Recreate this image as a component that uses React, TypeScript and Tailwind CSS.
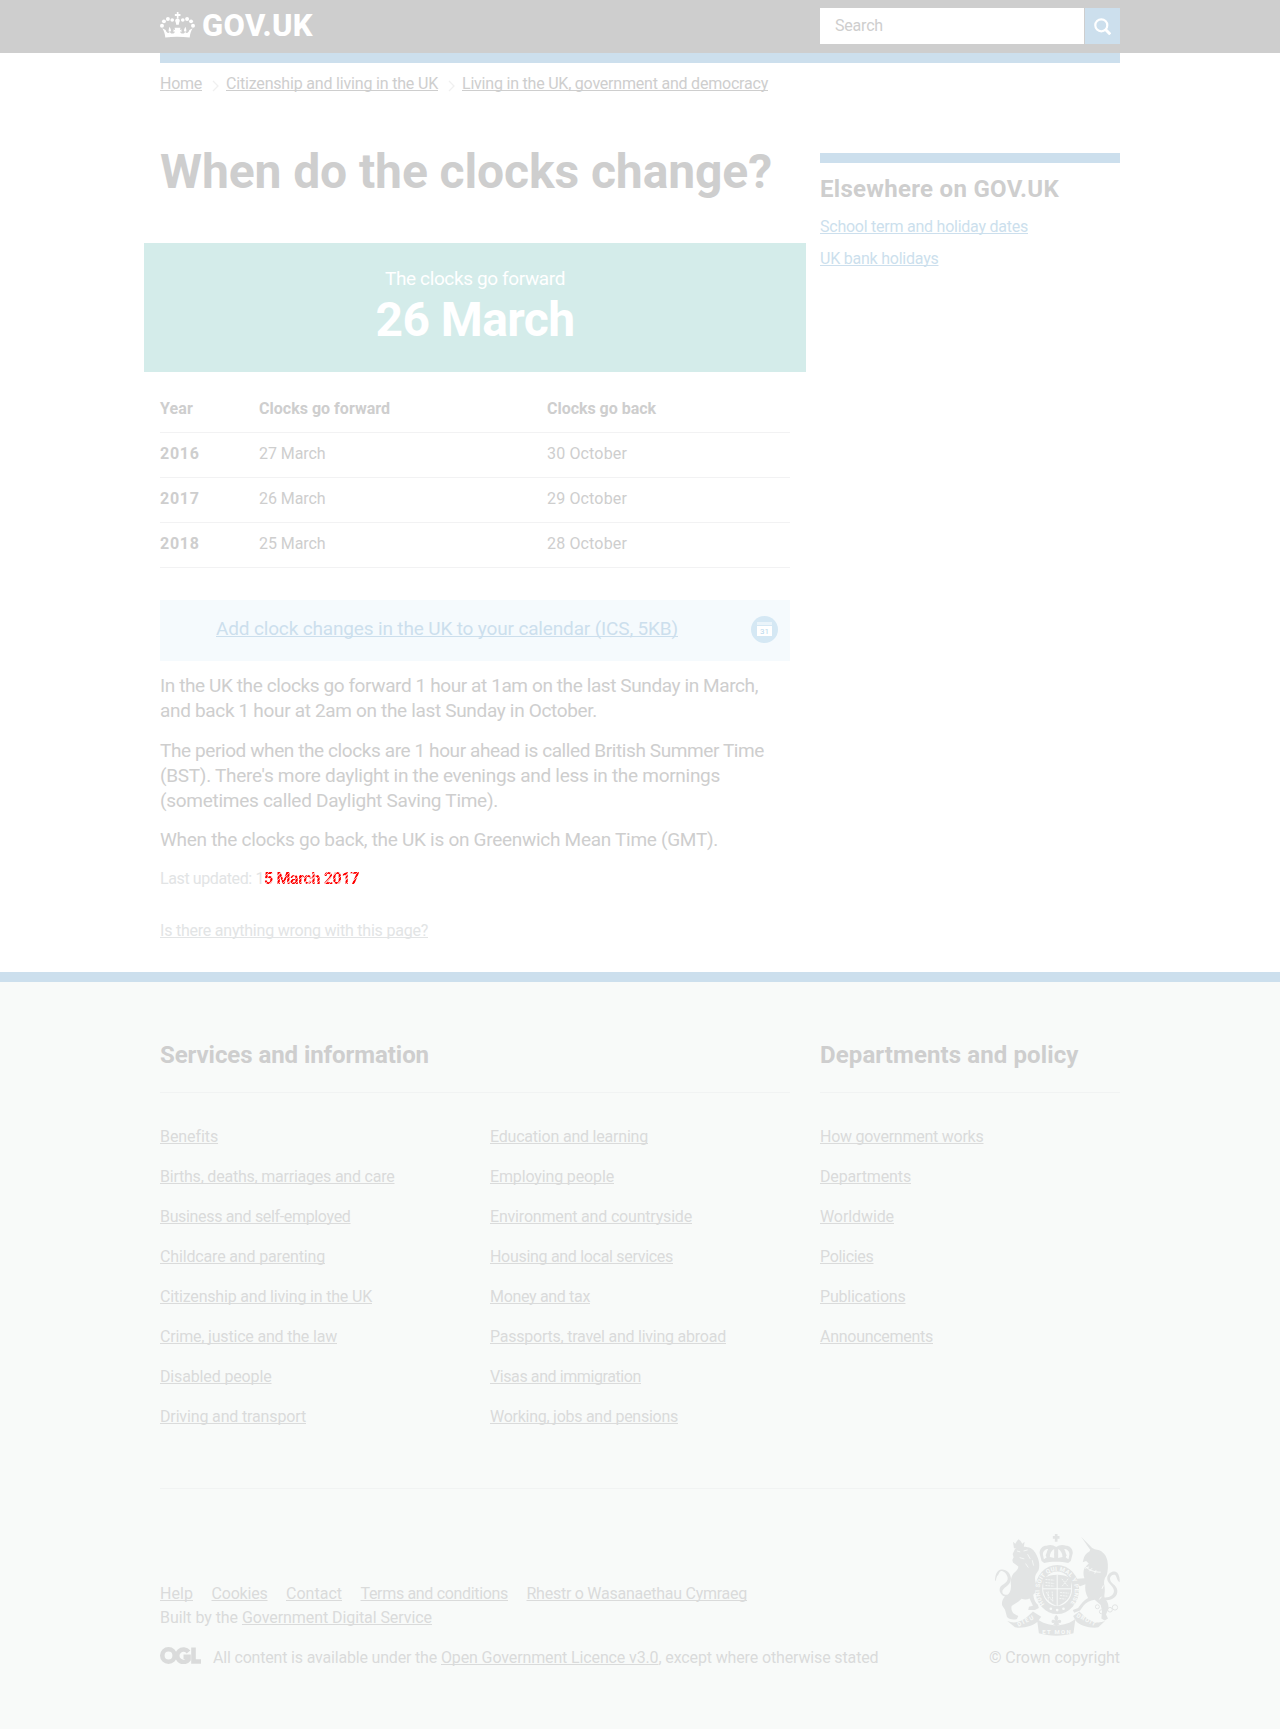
import { useLayoutEffect, useRef, useState } from "react";
import type { ReactNode } from "react";

/** Text set to a fixed measure by adjusting its tracking. */
function Fit({ w, children, className = "" }: { w: number; children: string; className?: string }) {
  const ref = useRef<HTMLSpanElement>(null);
  const [tracking, setTracking] = useState(0);
  useLayoutEffect(() => {
    if (ref.current) {
      const natural = ref.current.getBoundingClientRect().width;
      setTracking((t) => t + (w - natural) / children.length);
    }
  }, [w, children]);
  return (
    <span ref={ref} className={`whitespace-nowrap ${className}`} style={{ letterSpacing: `${tracking}px` }}>
      {children}
    </span>
  );
}

function Link({ w, children, className = "" }: { w: number; children: string; className?: string }) {
  return (
    <a href="#" className={`underline decoration-1 underline-offset-1 [text-decoration-skip-ink:none] ${className}`}>
      <Fit w={w}>{children}</Fit>
    </a>
  );
}

function Crown() {
  return (
    <svg viewBox="60 36 106 78" className="h-[26px] w-[35px]" fill="#fff">
      <path d="M76 113c-1-12-4-20-9-28l10 5c2 5 4 9 8 9 3 0 5-2 4-5l-3 1c0-6 1-10 3-15 3 5 5 10 4 15l-3-1c0 4 3 7 7 7 5 0 8-3 8-7l-4 3v-9l5 3-2-8h18l-2 8 5-3v9l-4-3c0 4 3 7 8 7 4 0 7-3 7-7l-3 1c-1-5 1-10 4-15 2 5 3 9 3 15l-3-1c-1 3 1 5 4 5 4 0 6-4 8-9l10-5c-5 8-8 16-9 28-24-3-53-3-77 0z" />
      <path d="M109 74c0-5-2-8-3-12 0-4 3-6 7-6s7 2 7 6c-1 4-3 7-3 12zM111 36h5v6h6v6h-6v7h-5v-7h-6v-6h6z" />
      <circle cx="97" cy="60" r="5.5" /><circle cx="84" cy="57" r="6" /><circle cx="72" cy="64" r="6" /><circle cx="66" cy="77" r="6" />
      <circle cx="129" cy="60" r="5.5" /><circle cx="142" cy="57" r="6" /><circle cx="154" cy="64" r="6" /><circle cx="160" cy="77" r="6" />
    </svg>
  );
}

function Crest() {
  const c = "#e2e4e4";
  return (
    <svg viewBox="74 71 376 307" className="block h-[102px] w-[125px]" fill={c}>
      {/* lion */}
      <path d="M128 94l7 6 5-8 5-5 6 5 5 8 7-6-3 20h-29z" />
      <path d="M134 116c12-8 34-9 48-2 10 6 17 18 22 32 4 12 4 24 1 34l-8 12c-4 8-3 18 0 28 3 14 0 28-8 34 2 14 6 24 14 30l3 10-12 6h-20l2-10 12-3-10-22c-8 4-16 4-24 1-10 10-22 16-30 22-2 8 0 16 6 22l14 8-4 9c-10 3-22 2-30-6l-6-22-8-12c-4-10 2-22 8-28 14-8 18-16 18-34-2-12 0-26 8-36 8-6 14-12 14-20l-16-12-2-8 4-8-3-10z" />
      <path d="M112 262c-16-2-26-14-24-26 3-16 26-14 24-34-2-12-12-20-20-20-6 2-6 10-12 16-4 8-2 16-6 14 0-14 4-32 18-34 16-2 28 10 30 26 0 24-28 28-26 42 1 6 8 9 16 8z" />
      <path d="M140 122l10 3M160 122l12-3M148 142l14 4M172 132l8 14M166 160l8 12M186 150l4 16" stroke="#f8faf9" strokeWidth="2.5" fill="none" />
      {/* unicorn */}
      <path d="M333 79l34 35-6 5zM340 148c2-12 10-20 18-24l6-12 10 5c20 2 34 14 38 34 3 14 2 32-2 44-8 10-10 22-6 36 2 20-4 26 2 36 8 10 12 22 8 32l-6 14 6 12-10 6-10-6 2-22-4-18-18-16c-14 2-26 8-34 18l-10 14-18 7-4-8 16-6c10-14 18-24 30-30-8-14-10-30-8-42l-16 6-20-14-14 4-3-8 18-14 10 10 22-2c-4-10-4-22 1-32l12-12-8-8-10 4z" />
      <path d="M402 262c18 2 30-8 30-20-2-18-24-22-20-42 4-14 20-22 30-12 6 8 8 18 7 28-8-4-8-16-14-22-8-2-15 4-15 12 0 14 20 18 22 34 2 18-14 32-38 30z" />
      {/* crown */}
      <path d="M254 71h8v6h6v8h-6v9h-8v-9h-6v-8h6z" />
      <path d="M214 152l-6-24c0-14 10-22 20-22 12-4 22-2 30 4 8-6 18-8 30-4 10 0 20 8 20 22l-6 24-8 6c-20-5-54-5-72 0z" />
      <g fill="#f8faf9"><path d="M218 132c0-10 8-16 16-16-5 8-6 16-5 26l-8 5zM239 140c0-10 4-18 13-24v27zM298 132c0-10-8-16-16-16 5 8 6 16 5 26l8 5zM277 140c0-10-4-18-13-24v27z" /></g>
      <g><path d="M232 126l6 9-6 9-6-9zM258 123l6 9-6 10-6-10zM284 126l6 9-6 9-6-9z" /></g>
      {/* garter and shield */}
      <ellipse cx="261" cy="238" rx="66" ry="74" />
      <ellipse cx="261" cy="236" rx="45" ry="52" fill="#f8faf9" />
      <path d="M219 204c28-14 56-14 84 0v36c-2 22-16 38-42 48-26-10-40-26-42-48z" />
      <path d="M261 194v94M218 236h86" stroke="#f8faf9" strokeWidth="3" />
      <path d="M226 208l26 2M226 217l26 3M226 226l26 2M270 247l26 2M270 256l22 2M268 265l18 2M275 206l18 22M276 228l18-22M228 246l17 25M234 244v28M246 244l2 32" stroke="#f8faf9" strokeWidth="2.5" fill="none" strokeDasharray="6 2" />
      <defs><path id="garter" d="M223 282a53 59 0 1 1 76 0" /></defs>
      <text fill="#f8faf9" fontFamily="Roboto" fontWeight="700" fontSize="18">
        <textPath href="#garter" textLength="262">HONI SOIT QUI MAL Y PENSE</textPath>
      </text>
      <g fill="#f8faf9"><circle cx="242" cy="296" r="4" /><circle cx="261" cy="300" r="4" /><circle cx="280" cy="296" r="4" /></g>
      <path d="M258 314c8 8 8 12 3 18 6-5 13-3 12 3-1 5-6 5-9 2l4 7-6 1-3 8-4-8-6-1 4-7c-3 3-9 2-9-3 0-6 7-7 12-2-5-6-5-10 2-18z" />
      {/* motto ribbon */}
      <path d="M111 333c30 12 52-4 77-29l25 16-9 12c-10 15-45 24-70 20zM405 333c-30 12-52-4-77-29l-19 14 8 14c10 15 45 24 68 20zM200 326c30 26 88 26 116 0l-6 44c-32 10-72 10-104 0z" />
      <g fill="#f8faf9" fontFamily="Roboto" fontWeight="700" fontSize="18">
        <text x="145" y="350" textLength="52" transform="rotate(-27 145 350)">DIEU</text>
        <text x="216" y="371" textLength="86">ET MON</text>
        <text x="318" y="320" textLength="62" transform="rotate(27 318 320)">DROIT</text>
      </g>
      {/* chain */}
      <g fill="none" stroke={c} strokeWidth="3"><circle cx="382" cy="290" r="6" /><circle cx="394" cy="305" r="6" /><circle cx="407" cy="294" r="7" /><circle cx="420" cy="299" r="7" /><circle cx="435" cy="292" r="8" /></g>
      <path d="M344 166c10 14 30 20 48 20M345 174l12-4M358 183l8-9M374 190l4-10M400 226l-4 10M388 268l6-8" stroke="#f8faf9" strokeWidth="3" fill="none" />
    </svg>
  );
}

function CalendarIcon() {
  return (
    <svg viewBox="0 0 27 27" className="h-[27px] w-[27px]">
      <circle cx="13.5" cy="13.5" r="13.5" fill="#d5e8f4" />
      <path d="M6 6h15v3H6z" fill="#eaf4fa" />
      <path d="M6 10h15v10H6z" fill="#fff" />
      <text x="13.5" y="18" textAnchor="middle" fontFamily="Roboto" fontSize="8" letterSpacing="0" fill="#b9d8ec">31</text>
    </svg>
  );
}

const crumbs: [string, number][] = [
  ["Home", 42],
  ["Citizenship and living in the UK", 212],
  ["Living in the UK, government and democracy", 306],
];

const years = [
  ["2016", "27 March", "30 October"],
  ["2017", "26 March", "29 October"],
  ["2018", "25 March", "28 October"],
];

const services: [string, number][][] = [
  [
    ["Benefits", 57.5],
    ["Births, deaths, marriages and care", 234.5],
    ["Business and self-employed", 190.5],
    ["Childcare and parenting", 165],
    ["Citizenship and living in the UK", 212],
    ["Crime, justice and the law", 177],
    ["Disabled people", 111.5],
    ["Driving and transport", 146],
  ],
  [
    ["Education and learning", 158],
    ["Employing people", 124],
    ["Environment and countryside", 202],
    ["Housing and local services", 183],
    ["Money and tax", 100],
    ["Passports, travel and living abroad", 236],
    ["Visas and immigration", 151],
    ["Working, jobs and pensions", 188],
  ],
];

const departments: [string, number][] = [
  ["How government works", 163.5],
  ["Departments", 91],
  ["Worldwide", 74],
  ["Policies", 53.5],
  ["Publications", 85.5],
  ["Announcements", 113],
];

function LinkList({ items }: { items: [string, number][] }) {
  return (
    <ul className="flex flex-1 flex-col gap-5">
      {items.map(([label, w]) => (
        <li key={label} className="h-5"><Link w={w}>{label}</Link></li>
      ))}
    </ul>
  );
}

function FooterHeading({ w, children }: { w: number; children: string }) {
  return (
    <h2 className="h-[53px] border-b border-[#f1f3f3] text-2xl leading-[30px] font-bold text-[#cecece]">
      <Fit w={w}>{children}</Fit>
    </h2>
  );
}

function Container({ children, className = "" }: { children: ReactNode; className?: string }) {
  return <div className={`mx-auto w-[960px] ${className}`}>{children}</div>;
}

export default function App() {
  return (
    <div className="flex h-[1729px] flex-col overflow-hidden bg-white font-['Roboto',sans-serif] text-base leading-5 text-[#cecece]">
      <header className="h-[53px] bg-[#cecece]">
        <Container className="flex justify-between">
          <a href="#" className="flex pt-3 text-white">
            <Crown />
            <span className="-mt-[4px] ml-[7px] text-[31px] leading-9 font-extrabold"><Fit w={111}>GOV.UK</Fit></span>
          </a>
          <form className="mt-2 flex h-9 w-[300px] gap-px">
            <div className="flex w-[264px] items-center bg-white pl-[15px]"><Fit w={48}>Search</Fit></div>
            <button type="button" className="flex w-[35px] items-center justify-center bg-[#ccdfed]" aria-label="Search">
              <svg viewBox="0 0 17 17" className="h-[17px] w-[17px]" fill="none" stroke="#fff" strokeWidth="2.2">
                <circle cx="7.3" cy="7.3" r="6" /><path d="M11.3 11.3l5 5" strokeWidth="3" />
              </svg>
            </button>
          </form>
        </Container>
      </header>

      <Container className="h-[919px]">
        <div className="h-2.5 bg-[#ccdfed]" />
        <nav className="mt-[11px] flex h-5">
          {crumbs.map(([label, w], i) => (
            <span key={label} className="flex">
              {i > 0 && (
                <svg viewBox="0 0 24 20" className="h-5 w-6" fill="none" stroke="#f0f0f0" strokeWidth="1.3">
                  <path d="M11 7l5 5-5 5" />
                </svg>
              )}
              <Link w={w}>{label}</Link>
            </span>
          ))}
        </nav>

        <div className="flex gap-[30px]">
          <main className="w-[630px] pt-[53px]">
            <h1 className="text-5xl leading-[50px] font-bold"><Fit w={612}>When do the clocks change?</Fit></h1>

            <div className="-mx-4 mt-[46px] h-[129px] bg-[#d4ecea] pt-[23px] text-center text-white">
              <p className="text-[19px] leading-[25px]"><Fit w={180}>The clocks go forward</Fit></p>
              <p className="mt-1 text-5xl leading-[50px] font-bold"><Fit w={199}>26 March</Fit></p>
            </div>

            <table className="mt-[15px] w-full table-fixed border-collapse text-left">
              <colgroup><col className="w-[99px]" /><col className="w-[288px]" /><col /></colgroup>
              <thead>
                <tr className="h-[45px] border-b border-[#f2f2f3] font-bold">
                  <th><Fit w={33}>Year</Fit></th>
                  <th><Fit w={131}>Clocks go forward</Fit></th>
                  <th><Fit w={109}>Clocks go back</Fit></th>
                </tr>
              </thead>
              <tbody>
                {years.map(([y, f, b]) => (
                  <tr key={y} className="h-[45px] border-b border-[#f2f2f3]">
                    <th className="pb-0.5"><Fit w={39.5}>{y}</Fit></th>
                    <td className="pb-0.5"><Fit w={66.5}>{f}</Fit></td>
                    <td className="pb-0.5"><Fit w={80}>{b}</Fit></td>
                  </tr>
                ))}
              </tbody>
            </table>

            <div className="mt-8 flex h-[61px] justify-between bg-[#f5fafd] pr-3 pl-14 pt-4">
              <Link w={462} className="text-[19px] leading-[25px] text-[#ccdfed]">Add clock changes in the UK to your calendar (ICS, 5KB)</Link>
              <CalendarIcon />
            </div>

            <div className="mt-3 flex flex-col gap-[15px] text-[19px] leading-[25px]">
              <p>
                <Fit w={598}>In the UK the clocks go forward 1 hour at 1am on the last Sunday in March,</Fit>{" "}
                <Fit w={437}>and back 1 hour at 2am on the last Sunday in October.</Fit>
              </p>
              <p>
                <Fit w={604}>The period when the clocks are 1 hour ahead is called British Summer Time</Fit>{" "}
                <Fit w={560}>(BST). There's more daylight in the evenings and less in the mornings</Fit>{" "}
                <Fit w={338}>(sometimes called Daylight Saving Time).</Fit>
              </p>
              <p className="-mt-px"><Fit w={558}>When the clocks go back, the UK is on Greenwich Mean Time (GMT).</Fit></p>
            </div>

            <p className="mt-[17px] text-[#e2e4e5]">
              <Fit w={104}>Last updated: 1</Fit>
              <Fit
                w={95}
                className="inline-block font-bold text-[#f00] [mask-image:repeating-linear-gradient(135deg,#000_0_2px,#0005_2px_3px)]"
              >
                5 March 2017
              </Fit>
            </p>
            <p className="mt-8 text-[#e2e4e5]"><Link w={268}>Is there anything wrong with this page?</Link></p>
          </main>

          <aside className="w-[300px] pt-[59px]">
            <div className="h-2.5 bg-[#ccdfed]" />
            <h2 className="mt-[11px] text-2xl leading-[30px] font-bold"><Fit w={239}>Elsewhere on GOV.UK</Fit></h2>
            <ul className="mt-[13px] flex flex-col gap-3 text-[#ccdfed]">
              <li><Link w={208}>School term and holiday dates</Link></li>
              <li><Link w={118.5}>UK bank holidays</Link></li>
            </ul>
          </aside>
        </div>
      </Container>

      <footer className="flex-1 border-t-10 border-[#ccdfed] bg-[#f8faf9] text-[#dadbdb]">
        <Container className="pt-[58px]">
          <div className="flex h-[449px] gap-[30px] border-b border-[#f1f3f3]">
            <section className="w-[630px]">
              <FooterHeading w={269}>Services and information</FooterHeading>
              <div className="mt-[34px] flex gap-[30px]">
                <div className="w-[300px]"><LinkList items={services[0]} /></div>
                <div className="w-[300px]"><LinkList items={services[1]} /></div>
              </div>
            </section>
            <section className="w-[300px]">
              <FooterHeading w={258.5}>Departments and policy</FooterHeading>
              <div className="mt-[34px]"><LinkList items={departments} /></div>
            </section>
          </div>

          <div className="flex justify-between">
            <div className="pt-[95px]">
              <div className="flex gap-[18.5px]">
                <Link w={33}>Help</Link>
                <Link w={56}>Cookies</Link>
                <Link w={56}>Contact</Link>
                <Link w={147.5}>Terms and conditions</Link>
                <Link w={220.5}>Rhestr o Wasanaethau Cymraeg</Link>
              </div>
              <p className="mt-1"><Fit w={78}>Built by the</Fit> <Link w={190}>Government Digital Service</Link></p>
              <div className="mt-5 flex">
                <svg viewBox="0 0 41 17" className="-mt-px mr-[12px] h-[17px] w-[41px]" fill="none" stroke="#dadbdb" strokeWidth="4.6">
                  <ellipse cx="8.5" cy="8.5" rx="6.2" ry="6.2" />
                  <path d="M28.5 5A6.3 6.2 0 1 0 28.5 12.5V9.8H23.5M33.5 0.5V14.5H41" />
                </svg>
                <p className="whitespace-nowrap"><Fit w={224}>All content is available under the</Fit> <Link w={217.5}>Open Government Licence v3.0</Link><Fit w={220}>, except where otherwise stated</Fit></p>
              </div>
            </div>
            <div className="flex flex-col items-end pt-[45px]">
              <Crest />
              <p className="mt-3"><Fit w={131}>© Crown copyright</Fit></p>
            </div>
          </div>
        </Container>
      </footer>
    </div>
  );
}
